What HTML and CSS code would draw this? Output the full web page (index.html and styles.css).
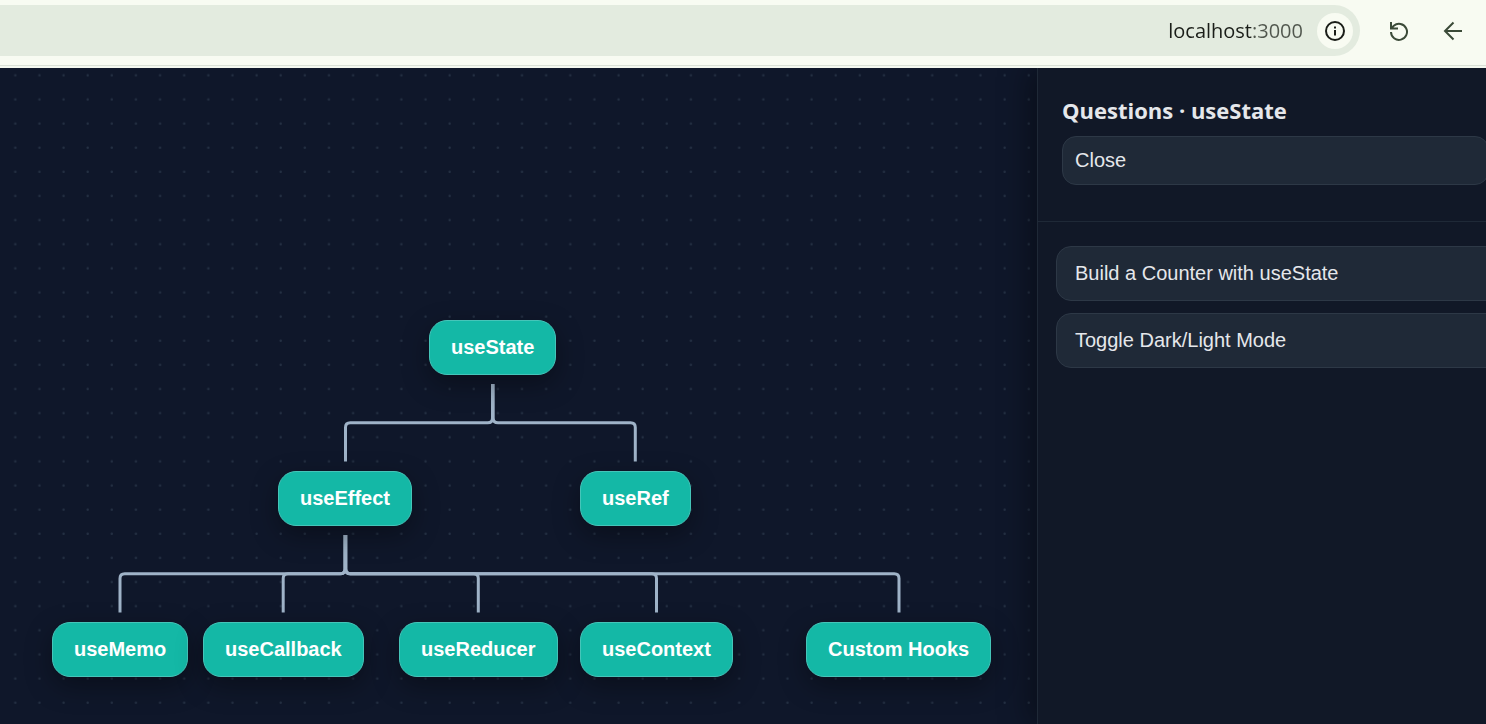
FILE: index.html
```html
<!DOCTYPE html>
<html lang="en">
<head>
<meta charset="utf-8">
<meta name="viewport" content="width=device-width, initial-scale=1">
<title>React Hooks Roadmap</title>
<link rel="stylesheet" href="styles.css">
</head>
<body>
<header class="toolbar">
  <div class="address">
    <input class="address-text" type="text" value="localhost:3000" aria-label="Address">
    <button class="info" type="button" aria-label="Site information">
      <svg width="20" height="20" viewBox="0 0 20 20" fill="none" stroke="currentColor" stroke-width="2">
        <circle cx="10" cy="10" r="9"/><path d="M10 9v5.500M10 5.500v2"/>
      </svg>
    </button>
  </div>
  <button class="tool" type="button" aria-label="Reload">
    <svg width="20" height="20" viewBox="0 0 20 20" fill="none" stroke="currentColor" stroke-width="2">
      <path d="M2 1v6.500h7M2.500 7L4.800 4.800A8 8 0 1 1 2 11"/>
    </svg>
  </button>
  <button class="tool" type="button" aria-label="Back">
    <svg width="20" height="20" viewBox="0 0 20 20" fill="none" stroke="currentColor" stroke-width="2">
      <path d="M19 10H2M10.500 1.500L2 10l8.500 8.500"/>
    </svg>
  </button>
</header>
<div class="workspace">
  <main class="canvas">
    <svg class="backdrop" width="100%" height="100%" aria-hidden="true">
      <defs>
        <pattern id="dots" x="3" y="-5" width="24.130" height="24.130" patternUnits="userSpaceOnUse">
          <circle cx="12.300" cy="12.300" r="1.200" fill="#243043"/>
        </pattern>
      </defs>
      <rect width="100%" height="100%" fill="url(#dots)"/>
    </svg>
    <svg class="edges" width="100%" height="100%" fill="none" stroke="#9fb3c8" stroke-width="3" aria-hidden="true">
      <path d="M492.500 316v34q0 4.800-4.800 4.800H350.300q-4.800 0-4.800 4.800v34"/>
      <path d="M493.200 316v34q0 4.800 4.800 4.800H630.500q4.800 0 4.800 4.800v34"/>
      <path d="M345 467v34q0 4.800-4.800 4.800H124.800q-4.800 0-4.800 4.800v34"/>
      <path d="M345 467v34q0 4.800-4.800 4.800H288q-4.800 0-4.800 4.800v34"/>
      <path d="M345.700 467v34q0 4.800 4.800 4.800H473.500q4.800 0 4.800 4.800v34"/>
      <path d="M345.700 467v34q0 4.800 4.800 4.800H651.700q4.800 0 4.800 4.800v34"/>
      <path d="M345.700 467v34q0 4.800 4.800 4.800H894.200q4.800 0 4.800 4.800v34"/>
    </svg>
    <button class="node" type="button" style="left:429px;top:252px">useState</button>
    <button class="node" type="button" style="left:278px;top:403px">useEffect</button>
    <button class="node" type="button" style="left:580px;top:403px">useRef</button>
    <button class="node" type="button" style="left:52px;top:554px">useMemo</button>
    <button class="node" type="button" style="left:203px;top:554px">useCallback</button>
    <button class="node" type="button" style="left:399px;top:554px">useReducer</button>
    <button class="node" type="button" style="left:580px;top:554px">useContext</button>
    <button class="node" type="button" style="left:806px;top:554px">Custom Hooks</button>
  </main>
  <aside class="panel">
    <div class="panel-head">
      <h2 class="panel-title">Questions · useState</h2>
      <button class="close" type="button">Close</button>
    </div>
    <div class="questions">
      <button class="question" type="button">Build a Counter with useState</button>
      <button class="question" type="button">Toggle Dark/Light Mode</button>
    </div>
  </aside>
</div>
</body>
</html>
```
FILE: styles.css
```css
* { box-sizing: border-box; }

body {
  margin: 0;
  height: 100vh;
  display: flex;
  flex-direction: column;
  overflow: hidden;
  background: #0f172a;
  font-family: "Liberation Sans", Arial, sans-serif;
}

button {
  margin: 0;
  font: inherit;
  color: inherit;
  cursor: pointer;
}

.toolbar {
  position: relative;
  z-index: 1;
  display: flex;
  align-items: center;
  padding: 5px 14px 9px 0;
  background: #f8fbf2;
  border-bottom: 1px solid #d9e0d6;
  box-shadow: 0 2px 0 #f4f8ef;
  margin-bottom: 2px;
}

.address {
  flex: 1;
  display: flex;
  align-items: center;
  justify-content: flex-end;
  gap: 14px;
  padding: 8px 7px 7px;
  margin-right: 20px;
  background: #e3ebdf;
  border-radius: 0 26px 26px 0;
}

.address-text {
  flex: 1;
  min-width: 0;
  padding: 0;
  border: 0;
  font: 20px/28px "Open Sans", "Noto Sans", sans-serif;
  text-align: right;
  color: transparent;
  caret-color: #1a1d18;
  background: linear-gradient(to left, #50564d 51px, #1a1d18 51px);
  background-clip: text;
  -webkit-background-clip: text;
}

.info {
  display: grid;
  place-items: center;
  width: 36px;
  height: 36px;
  padding: 0;
  border: 0;
  border-radius: 50%;
  background: #f8fbf2;
  color: #1a1d18;
}

.tool {
  display: grid;
  place-items: center;
  width: 38px;
  height: 38px;
  padding: 0;
  border: 0;
  background: none;
  color: #3b4a38;
}

.tool + .tool { margin-left: 16px; }

.workspace {
  flex: 1;
  display: flex;
  min-height: 0;
}

.canvas {
  position: relative;
  flex: 1;
  min-width: 0;
  overflow: hidden;
}

.backdrop,
.edges {
  position: absolute;
  inset: 0;
  pointer-events: none;
}

.node {
  position: absolute;
  padding: 15px 21px;
  border: 1px solid #45c5b9;
  border-radius: 18px;
  background: #14b8a6;
  color: #fff;
  font-size: 20px;
  font-weight: 700;
  line-height: 23px;
  white-space: nowrap;
  box-shadow: 0 9px 27px rgba(0, 0, 0, 0.35);
}

.panel {
  position: relative;
  flex: 0 0 449px;
  overflow: hidden;
  border-left: 1px solid #1f2937;
  background: #111827;
  color: #e5e7eb;
  box-shadow: -9px 0 27px rgba(0, 0, 0, 0.35);
}

.panel-head {
  padding: 24px 0 36px 24px;
  border-bottom: 1px solid #1f2937;
}

.panel-title {
  margin: 0 0 8px;
  font: 700 22px/36px "Open Sans", "Noto Sans", sans-serif;
}

.close,
.question {
  display: block;
  border: 1px solid #2d3846;
  background: #1f2937;
  font-size: 20px;
  line-height: 23px;
  text-align: left;
}

.close {
  width: calc(100% + 3px);
  padding: 12px;
  border-radius: 14px;
}

.questions {
  display: grid;
  gap: 12px;
  padding: 24px 0 24px 18px;
}

.question {
  width: calc(100% + 18px);
  padding: 15px 18px;
  border-radius: 15px;
}
```
